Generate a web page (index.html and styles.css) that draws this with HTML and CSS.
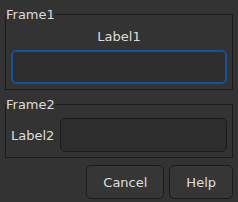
FILE: index.html
```html
<!DOCTYPE html>
<html lang="en">
<head>
  <meta charset="UTF-8">
  <title>Dialog</title>
  <link rel="stylesheet" href="styles.css">
</head>
<body>
  <div class="dialog">
    <!-- Frame1 -->
    <fieldset class="frame">
      <legend class="frame-title">Frame1</legend>
      <div class="frame-body column">
        <label class="label center" for="entry1">Label1</label>
        <input class="entry focused" id="entry1" type="text">
      </div>
    </fieldset>

    <!-- Frame2 -->
    <fieldset class="frame">
      <legend class="frame-title">Frame2</legend>
      <div class="frame-body row">
        <label class="label" for="entry2">Label2</label>
        <input class="entry grow" id="entry2" type="text">
      </div>
    </fieldset>

    <!-- Botoes -->
    <div class="buttons">
      <button class="btn">Cancel</button>
      <button class="btn">Help</button>
    </div>
  </div>
</body>
</html>
```

FILE: styles.css
```css
/* base */
* {
  margin: 0;
  padding: 0;
  box-sizing: border-box;
}
html, body {
  height: 100%;
  background: #333333;
  color: #dedede;
  font-family: "DejaVu Sans", sans-serif;
  font-size: 13px;
  overflow: hidden;
}

.dialog {
  display: flex;
  flex-direction: column;
  gap: 7px;
  padding: 7px 5px 5px;
}

/* frames */
.frame {
  border: 1px solid #1b1b1b;
  padding: 0;
  min-width: 0;
}
.frame-title {
  padding: 0;
  line-height: 15px;
  color: #dcdcdc;
}
.frame-body {
  display: flex;
  padding: 6px 5px 5px;
}
.column {
  flex-direction: column;
  gap: 5px;
}
.row {
  align-items: center;
  gap: 6px;
}

.label {
  line-height: 17px;
}
.center {
  text-align: center;
}

/* entries */
.entry {
  height: 34px;
  background: #2d2d2d;
  border: 1px solid #1b1b1b;
  border-radius: 5px;
  color: #dedede;
  font: inherit;
  outline: none;
}
.entry.focused {
  border-color: #15539e;
  box-shadow: inset 0 0 0 1px #15539e;
}
.grow {
  flex: 1;
  min-width: 0;
}

/* botoes */
.buttons {
  display: flex;
  justify-content: flex-end;
  gap: 5px;
}
.btn {
  height: 34px;
  padding: 0 16px;
  background: #363636;
  border: 1px solid #1b1b1b;
  border-radius: 5px;
  color: #dedede;
  font: inherit;
}
```
